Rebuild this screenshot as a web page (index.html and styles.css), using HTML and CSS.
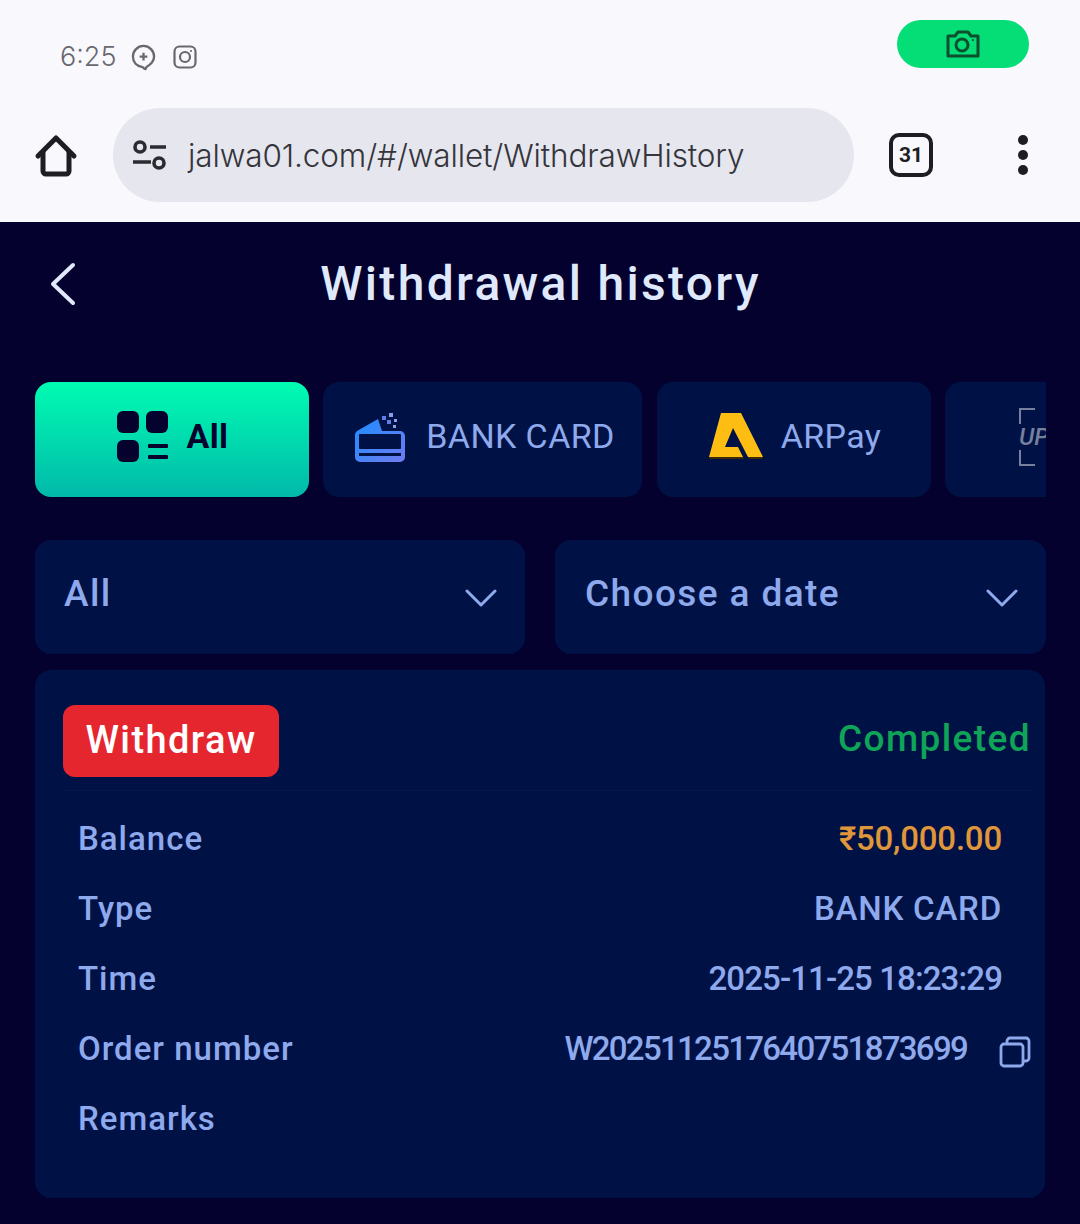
FILE: index.html
```html
<!DOCTYPE html>
<html lang="en">

<head>
    <meta charset="UTF-8">
    <title>Withdrawal history</title>
    <link rel="stylesheet" href="styles.css">
</head>

<body>
    <div class="browser">
        <div class="status-bar">
            <div class="status-left">
                <span class="clock">6:25</span>
                <svg class="status-icon" viewBox="0 0 26 28" fill="none" stroke="#68686e" stroke-width="2.4">
                    <path d="M13 2a11 11 0 0 1 11 11c0 5-3 8-8 11l-1 2c-1 0-2-1-3-2C6 23 2 19 2 13A11 11 0 0 1 13 2z" />
                    <path d="M13 9v8M9 13h8" stroke-width="2.4" />
                </svg>
                <svg class="status-icon insta" viewBox="0 0 24 24" fill="none" stroke="#68686e" stroke-width="2.2">
                    <rect x="1.5" y="1.5" width="21" height="21" rx="5" />
                    <circle cx="12" cy="12" r="5" />
                    <circle cx="18" cy="6" r="1.1" fill="#68686e" stroke="none" />
                </svg>
            </div>
            <div class="camera-pill">
                <svg viewBox="0 0 34 28" width="34" height="28" fill="none" stroke="#0c4f2e" stroke-width="3">
                    <path d="M2 6h7l3-4h10l3 4h7v20H2z" stroke-linejoin="round" />
                    <circle cx="16" cy="15" r="6" />
                    <circle cx="27" cy="10" r="1" fill="#0c4f2e" stroke="none" />
                </svg>
            </div>
        </div>
        <div class="address-row">
            <svg class="home-icon" viewBox="0 0 44 44" fill="none" stroke="#1d1d22" stroke-width="5" stroke-linejoin="round">
                <path d="M4 23 22 5l18 18" stroke-linecap="round" />
                <path d="M9 18v20a3 3 0 0 0 3 3h20a3 3 0 0 0 3-3V18" />
            </svg>
            <div class="url-pill">
                <svg class="tune-icon" viewBox="0 0 36 30" fill="none" stroke="#2b2b31" stroke-width="3.6">
                    <circle cx="8" cy="7" r="5" />
                    <path d="M18 7h16M1 22h18" />
                    <circle cx="27" cy="23" r="5" />
                </svg>
                <span class="url">jalwa01.com/#/wallet/WithdrawHistory</span>
            </div>
            <div class="tab-count">31</div>
            <div class="menu-dots"><i></i><i></i><i></i></div>
        </div>
    </div>

    <div class="page">
        <div class="top-bar">
            <svg class="back-icon" viewBox="0 0 28 44" fill="none" stroke="#dfe9fb" stroke-width="4" stroke-linecap="round" stroke-linejoin="round">
                <path d="M24 3 4 22l20 19" />
            </svg>
            <h1>Withdrawal history</h1>
        </div>

        <div class="tabs">
            <div class="tab tab-active">
                <svg class="tab-icon all-icon" viewBox="0 0 52 52" fill="#05022e">
                    <rect x="0" y="0" width="22" height="22" rx="6" />
                    <rect x="29" y="0" width="22" height="22" rx="6" />
                    <rect x="0" y="29" width="22" height="22" rx="6" />
                    <rect x="31" y="33" width="20" height="4" rx="1" />
                    <rect x="31" y="44" width="20" height="4" rx="1" />
                </svg>
                <span>All</span>
            </div>
            <div class="tab tab-bank">
                <svg class="tab-icon" viewBox="0 0 52 52" width="52" height="52">
                    <defs>
                        <linearGradient id="cardgrad" x1="0" y1="0" x2="1" y2="1">
                            <stop offset="0" stop-color="#1c8dff" />
                            <stop offset="1" stop-color="#6f7cf0" />
                        </linearGradient>
                    </defs>
                    <path d="M3 20 24 8l4 12h18a5 5 0 0 1 5 5v21a5 5 0 0 1-5 5H6a5 5 0 0 1-5-5V24a5 5 0 0 1 2-4z" fill="url(#cardgrad)" />
                    <rect x="5" y="23" width="42" height="15" rx="1" fill="#001245" />
                    <rect x="5" y="42" width="42" height="3" fill="#001245" />
                    <rect x="28" y="5" width="4" height="4" fill="#5f7de8" />
                    <rect x="35" y="2" width="4" height="4" fill="#8a9fe8" />
                    <rect x="33" y="9" width="4" height="4" fill="#5f7de8" />
                    <rect x="40" y="8" width="3" height="3" fill="#8a9fe8" />
                    <rect x="39" y="14" width="3" height="3" fill="#8a9fe8" />
                </svg>
                <span>BANK CARD</span>
            </div>
            <div class="tab tab-ar">
                <svg class="tab-icon" viewBox="0 0 54 46" width="54" height="46">
                    <path d="M12 0H32L54 44H39L24 15 16 34H29L34 44H0z" fill="#fdbd12" />
                    <path d="M0 44H34l1 2H1zM39 44H54l-1 2H40z" fill="#3a2c08" />
                </svg>
                <span>ARPay</span>
            </div>
            <div class="tab tab-clip">
                <div class="upi-mark">
                    <i class="corner corner-top"></i>
                    <span class="upi-text">UPI</span>
                    <i class="corner corner-bottom"></i>
                </div>
            </div>
        </div>

        <div class="filters">
            <div class="filter">
                <span>All</span>
                <svg class="chevron" viewBox="0 0 32 20" fill="none" stroke="#8ea9ec" stroke-width="3" stroke-linecap="round" stroke-linejoin="round">
                    <path d="M2 3l14 14L30 3" />
                </svg>
            </div>
            <div class="filter">
                <span>Choose a date</span>
                <svg class="chevron" viewBox="0 0 32 20" fill="none" stroke="#8ea9ec" stroke-width="3" stroke-linecap="round" stroke-linejoin="round">
                    <path d="M2 3l14 14L30 3" />
                </svg>
            </div>
        </div>

        <div class="record">
            <div class="record-head">
                <span class="badge">Withdraw</span>
                <span class="state">Completed</span>
            </div>
            <div class="record-rows">
                <div class="row"><span>Balance</span><span class="amount">₹50,000.00</span></div>
                <div class="row"><span>Type</span><span class="type-value">BANK CARD</span></div>
                <div class="row"><span>Time</span><span class="time-value">2025-11-25 18:23:29</span></div>
                <div class="row">
                    <span>Order number</span>
                    <span class="order-value">W2025112517640751873699
                        <svg class="copy-icon" viewBox="0 0 32 32" fill="none" stroke="#8ea9ec" stroke-width="2.8" stroke-linejoin="round">
                            <rect x="2" y="8" width="22" height="22" rx="3" />
                            <path d="M8 8V5a3 3 0 0 1 3-3h16a3 3 0 0 1 3 3v17a3 3 0 0 1-3 3h-3" />
                        </svg>
                    </span>
                </div>
                <div class="row"><span>Remarks</span></div>
            </div>
        </div>
    </div>
</body>

</html>
```

FILE: styles.css
```css
* {
    box-sizing: border-box;
}

html,
body {
    margin: 0;
    padding: 0;
}

body {
    width: 1080px;
    height: 1224px;
    overflow: hidden;
    font-family: 'Roboto', 'Liberation Sans', sans-serif;
    background-color: #04012e;
}

.browser {
    height: 222px;
    background-color: #f8f8fd;
}

.status-bar {
    height: 108px;
    padding: 20px 51px 0 60px;
    display: flex;
    justify-content: space-between;
    align-items: flex-start;
}

.status-left {
    display: flex;
    align-items: center;
    margin-top: 20px;
    color: #68686e;
}

.clock {
    font-family: 'Inter', sans-serif;
    font-size: 27px;
    font-weight: 300;
    line-height: 34px;
}

.status-icon {
    width: 25px;
    height: 27px;
    margin-left: 15px;
}

.status-icon.insta {
    width: 24px;
    height: 24px;
    margin-left: 17px;
}

.camera-pill {
    width: 132px;
    height: 48px;
    border-radius: 24px;
    background-color: #05dd76;
    display: flex;
    align-items: center;
    justify-content: center;
}

.address-row {
    display: flex;
    align-items: center;
    height: 94px;
    padding-left: 34px;
}

.home-icon {
    width: 44px;
    height: 44px;
}

.url-pill {
    width: 741px;
    height: 94px;
    margin-left: 35px;
    padding-left: 19px;
    border-radius: 47px;
    background-color: #e6e6ee;
    display: flex;
    align-items: center;
}

.tune-icon {
    width: 36px;
    height: 30px;
}

.url {
    margin-left: 20px;
    font-family: 'Inter', sans-serif;
    font-size: 31.5px;
    font-weight: 300;
    letter-spacing: -0.12px;
    color: #35353b;
}

.tab-count {
    width: 44px;
    height: 44px;
    margin-left: 35px;
    border: 4px solid #1d1d22;
    border-radius: 10px;
    display: flex;
    align-items: center;
    justify-content: center;
    font-size: 21px;
    font-weight: 700;
    color: #1d1d22;
}

.menu-dots {
    margin-left: 85px;
    display: flex;
    flex-direction: column;
    gap: 5px;
}

.menu-dots i {
    display: block;
    width: 10px;
    height: 10px;
    border-radius: 50%;
    background-color: #1d1d22;
}

.page {
    padding: 0 34px 0 35px;
    color: #8ea9ec;
}

.top-bar {
    height: 123px;
    display: flex;
    align-items: center;
    justify-content: center;
    position: relative;
}

.back-icon {
    position: absolute;
    left: 14px;
    top: 40px;
    width: 28px;
    height: 44px;
}

h1 {
    margin: 0;
    font-size: 48px;
    font-weight: 500;
    letter-spacing: 2.3px;
    color: #dfe9fb;
}

.tabs {
    margin-top: 37px;
    height: 115px;
    display: flex;
    gap: 14px;
    overflow: hidden;
}

.tab {
    flex: none;
    height: 115px;
    border-radius: 16px;
    background-color: #001245;
    display: flex;
    align-items: center;
    justify-content: center;
    font-size: 34px;
    letter-spacing: 0.4px;
    color: #8ea9ec;
}

.tab > span,
.tab-ar .tab-icon {
    margin-bottom: 8px;
}

.tab-icon {
    margin-right: 20px;
    margin-bottom: 6px;
}

.tab-active {
    width: 274px;
    padding-left: 2px;
    background: linear-gradient(180deg, #00fcb2 0%, #01b9aa 100%);
    color: #05022e;
    font-weight: 700;
}

.all-icon {
    width: 52px;
    height: 52px;
    margin-right: 17px;
}

.tab-bank {
    width: 319px;
    padding-left: 4px;
}

.tab-ar {
    width: 274px;
    margin-left: 1px;
    padding-left: 2px;
}

.tab-ar .tab-icon {
    margin-right: 18px;
}

.tab-clip {
    width: 101px;
    border-radius: 16px 0 0 16px;
    justify-content: flex-start;
    align-items: flex-start;
    padding: 26px 0 0 74px;
}

.upi-mark {
    width: 28px;
    height: 58px;
    overflow: hidden;
    display: flex;
    flex-direction: column;
    justify-content: space-between;
}

.corner {
    display: block;
    width: 16px;
    height: 16px;
}

.corner-top {
    border-top: 2px solid #77809c;
    border-left: 2px solid #77809c;
}

.corner-bottom {
    border-bottom: 2px solid #77809c;
    border-left: 2px solid #77809c;
}

.upi-text {
    font-size: 24px;
    line-height: 22px;
    font-style: italic;
    font-weight: 500;
    color: #77809c;
    letter-spacing: 0;
}

.filters {
    margin-top: 43px;
    display: flex;
    gap: 30px;
}

.filter {
    flex: 1;
    height: 114px;
    padding: 0 28px 0 30px;
    border-radius: 16px;
    background-color: #001245;
    display: flex;
    align-items: center;
    justify-content: space-between;
    font-size: 37px;
    font-weight: 500;
    letter-spacing: 1.4px;
}

.filter:first-child {
    flex: none;
    width: 490px;
    padding-left: 29px;
}

.filter span {
    margin-bottom: 8px;
}

.chevron {
    width: 32px;
    height: 20px;
    margin-top: 2px;
}

.record {
    margin-top: 16px;
    margin-right: 1px;
    height: 528px;
    padding: 35px 14px 0 28px;
    border-radius: 16px;
    background-color: #001245;
}

.record-head {
    height: 86px;
    padding-bottom: 14px;
    border-bottom: 1px solid #04184e;
    display: flex;
    align-items: center;
    justify-content: space-between;
}

.badge {
    width: 216px;
    height: 72px;
    padding-bottom: 2px;
    border-radius: 12px;
    background-color: #e6262f;
    color: #fff;
    display: flex;
    align-items: center;
    justify-content: center;
    font-size: 38px;
    font-weight: 500;
    letter-spacing: 1.4px;
}

.state {
    margin-bottom: 4px;
    font-size: 37px;
    font-weight: 500;
    letter-spacing: 1.4px;
    color: #0fa457;
}

.record-rows {
    padding: 12px 29px 0 15px;
}

.row {
    height: 70px;
    display: flex;
    align-items: center;
    justify-content: space-between;
    font-size: 33px;
    font-weight: 500;
    letter-spacing: 1px;
}

.amount {
    letter-spacing: -0.2px;
    color: #e0963a;
}

.type-value {
    letter-spacing: 0.8px;
}

.time-value {
    letter-spacing: -0.9px;
}

.order-value {
    display: flex;
    align-items: center;
    position: relative;
    margin-right: 35px;
    letter-spacing: -1.7px;
}

.copy-icon {
    position: absolute;
    right: -64px;
    top: 7px;
    width: 32px;
    height: 32px;
}
```
